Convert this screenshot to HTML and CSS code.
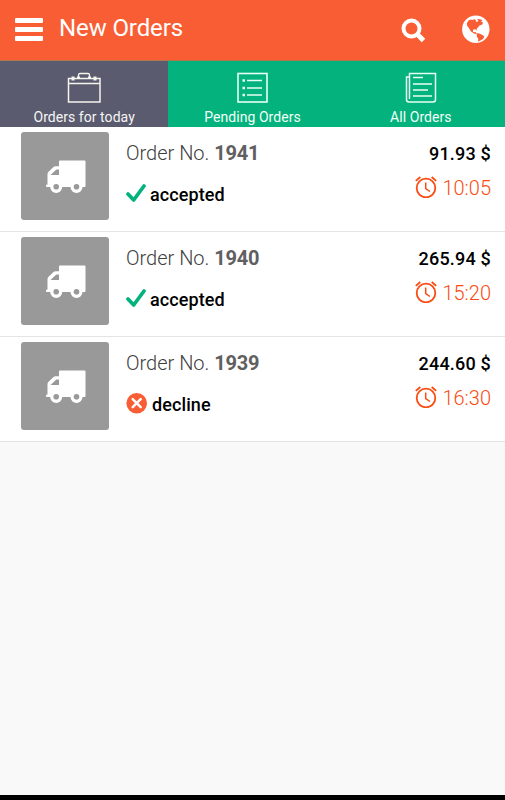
FILE: index.html
```
<!DOCTYPE html>
<html lang="en">
<head>
    <meta charset="UTF-8">
    <meta name="viewport" content="width=device-width, initial-scale=1.0">
    <title>New Orders</title>
    <link rel="stylesheet" href="styles.css">
</head>
<body>
    <!-- Shared icons -->
    <svg class="icon-defs" width="0" height="0">
        <symbol id="truck" viewBox="0 0 40 34">
            <path fill="#fff" d="M14 .5H38.500Q39.500 .5 39.500 1.500V26Q39.500 27 38.500 27H36.500A6 6 0 0 1 24.500 27H16.200A6 6 0 0 1 4.200 27H.8Q0 27 0 26.200V25Q0 24.500 1.500 24.500V14Q1.500 12.800 2.300 12L7.500 7Q8.300 6.300 9.500 6.300H13V1.500Q13 .5 14 .5Z"/>
            <path fill="#999" d="M4.500 15L9.600 10.200Q10 9.500 10.800 9.500H13V15Z"/>
            <circle cx="10.200" cy="26.800" r="2.800" fill="#999"/>
            <circle cx="30.500" cy="26.800" r="2.800" fill="#999"/>
        </symbol>
        <symbol id="clock" viewBox="0 0 22 22">
            <g fill="none" stroke="#fa4b12">
                <circle cx="11" cy="12" r="9.300" stroke-width="1.800"/>
                <path stroke-width="1.500" d="M10.700 6.500V12.500L15 15.500"/>
                <path stroke-width="1.800" d="M.8 4.900L5.300 1M16.700 1L21.200 4.900"/>
            </g>
        </symbol>
        <symbol id="check" viewBox="0 0 20 20">
            <path fill="none" stroke="#03b27d" stroke-width="3.700" stroke-linejoin="round" stroke-linecap="round" d="M2 10L7.700 16L18 2"/>
        </symbol>
        <symbol id="cross" viewBox="0 0 22 22">
            <circle cx="10.700" cy="10.300" r="10.300" fill="#f95d34"/>
            <path stroke="#fff" stroke-width="2.500" stroke-linecap="round" d="M6.700 6.200L14.700 14.200M14.700 6.200L6.700 14.200"/>
        </symbol>
    </svg>

    <header class="topbar">
        <div class="menu">
            <span></span>
            <span></span>
            <span></span>
        </div>
        <h1>New Orders</h1>
        <svg class="search" width="26" height="26" viewBox="0 0 26 26">
            <circle cx="10.500" cy="10.500" r="8" fill="none" stroke="#fff" stroke-width="4"/>
            <path stroke="#fff" stroke-width="5" d="M16 16L22.500 22.500"/>
        </svg>
        <svg class="globe" width="28" height="28" viewBox="0 0 28 28">
            <circle cx="13.800" cy="14.200" r="13.700" fill="#fff"/>
            <path fill="#f95d34" d="M5 8L6.500 5.500L9 4.500L10.500 5L12.500 4.200L14 5L13.500 6L15 7L16.500 6L15 4.500L17 4L20.500 5L19 6.500L21 7.500L20.300 9.500L17.500 10.500L16 12.500L14.800 13.500L14.500 15.500L13.300 14.200L11.300 14.500L10.800 16.500L12 17.200L13.800 17L14 18.500L16.500 18.200L20 19.800L22.500 21.500L21 24L18 25.800L16 26.800L16.400 24L14.800 21.500L15 19.500L12 18.600L9 16.500L6.500 12.500L5 10.500Z"/>
        </svg>
    </header>

    <nav class="tabs">
        <a class="tab active">
            <svg width="34" height="32" viewBox="0 0 34 32" fill="none" stroke="#f5f5ef">
                <rect x="1.500" y="6.500" width="31.500" height="23.500" stroke-width="1.500"/>
                <path stroke-width="1.300" d="M1.500 11.500H33M11.500 6V3Q11.500 1.500 13 1.500H21Q22.500 1.500 22.500 3V6"/>
                <path stroke-width="3" d="M6 4.500V8.500M28 4.500V8.500M11.500 4.500V7M22.500 4.500V7"/>
            </svg>
            Orders for today
        </a>
        <a class="tab">
            <svg width="34" height="32" viewBox="0 0 34 32" fill="none" stroke="#e8fff4">
                <rect x="3" y="1.500" width="29" height="28.500" stroke-width="1.600"/>
                <path stroke-width="1.500" d="M12 8.500H27M12 16H27M12 23H27"/>
                <path stroke-width="2.500" d="M7.500 8.500H10M7.500 16H10M7.500 23H10"/>
            </svg>
            Pending Orders
        </a>
        <a class="tab">
            <svg width="34" height="32" viewBox="0 0 34 32" fill="none" stroke="#e8fff4" stroke-width="1.500">
                <path d="M5.500 27V1.500H31.500V27.500Q31.500 30 29 30H5Q2.500 30 2.500 27.500V5H5.500"/>
                <path d="M9 5.500H19M9 12H28M9 18H24M9 24H28"/>
            </svg>
            All Orders
        </a>
    </nav>

    <main class="orders">
        <div class="order">
            <div class="thumb"><svg width="40" height="34"><use href="#truck"/></svg></div>
            <div class="info">
                <p class="number">Order No. <b>1941</b></p>
                <p class="status"><svg width="20" height="20"><use href="#check"/></svg>accepted</p>
            </div>
            <div class="summary">
                <p class="price">91.93 $</p>
                <p class="time"><svg width="22" height="22"><use href="#clock"/></svg>10:05</p>
            </div>
        </div>
        <div class="order">
            <div class="thumb"><svg width="40" height="34"><use href="#truck"/></svg></div>
            <div class="info">
                <p class="number">Order No. <b>1940</b></p>
                <p class="status"><svg width="20" height="20"><use href="#check"/></svg>accepted</p>
            </div>
            <div class="summary">
                <p class="price">265.94 $</p>
                <p class="time"><svg width="22" height="22"><use href="#clock"/></svg>15:20</p>
            </div>
        </div>
        <div class="order">
            <div class="thumb"><svg width="40" height="34"><use href="#truck"/></svg></div>
            <div class="info">
                <p class="number">Order No. <b>1939</b></p>
                <p class="status"><svg width="22" height="22"><use href="#cross"/></svg>decline</p>
            </div>
            <div class="summary">
                <p class="price">244.60 $</p>
                <p class="time"><svg width="22" height="22"><use href="#clock"/></svg>16:30</p>
            </div>
        </div>
    </main>
    <footer class="bottom"></footer>
</body>
</html>
```
FILE: styles.css
```
* {
    box-sizing: border-box;
}

body {
    margin: 0;
    height: 100vh;
    display: flex;
    flex-direction: column;
    font-family: Roboto, sans-serif;
    background-color: #f9f9f9;
    overflow: hidden;
}

h1, p {
    margin: 0;
}

svg {
    flex: none;
}

.icon-defs {
    display: block;
    height: 0;
}

/* Header */
.topbar {
    display: flex;
    align-items: flex-start;
    height: 61px;
    flex: none;
    padding: 0 15px;
    background-color: #f95d34;
    border-bottom: 1px solid #b07850;
}

.menu {
    display: flex;
    flex-direction: column;
    gap: 4px;
    width: 28px;
    margin-top: 18px;
}

.menu span {
    height: 5px;
    border-radius: 1px;
    background-color: #fff;
}

.topbar h1 {
    flex: 1;
    margin: 14px 0 0 16px;
    font-size: 24px;
    line-height: 28px;
    font-weight: 400;
    letter-spacing: -0.1px;
    color: #fff;
}

.search {
    margin-top: 18px;
}

.globe {
    margin: 15px 0 0 35px;
}

/* Tabs */
.tabs {
    display: grid;
    grid-template-columns: repeat(3, 1fr);
    flex: none;
    height: 66px;
    background-color: #03b27d;
}

.tab {
    display: flex;
    flex-direction: column;
    align-items: center;
    padding-top: 11px;
    font-size: 14px;
    line-height: 16px;
    letter-spacing: 0.05px;
    color: #f3fff9;
}

.tab svg {
    margin-bottom: 5px;
}

.tab.active {
    background-color: #5a5b6e;
    color: #f5f5f5;
}

/* Orders */
.order {
    display: flex;
    height: 105px;
    padding: 5px 14px 0 21px;
    background-color: #fff;
    border-bottom: 1px solid #e4e4e4;
}

.thumb {
    display: flex;
    align-items: center;
    justify-content: center;
    width: 88px;
    height: 88px;
    padding: 1px 0 0 2px;
    border-radius: 3px;
    background-color: #999;
}

.info {
    flex: 1;
    margin-left: 17px;
}

.number {
    padding-top: 9px;
    font-size: 20px;
    line-height: 24px;
    font-weight: 300;
    color: #404040;
}

.number b {
    font-weight: 700;
    letter-spacing: -0.2px;
    color: #606060;
}

.status {
    display: flex;
    align-items: center;
    gap: 4px;
    height: 24px;
    margin-top: 17px;
    font-size: 18px;
    font-weight: 500;
    letter-spacing: 0.1px;
    color: #000;
}

.summary {
    text-align: right;
}

.price {
    padding-top: 10px;
    font-size: 18px;
    line-height: 24px;
    font-weight: 500;
    letter-spacing: 0.2px;
    color: #000;
}

.time {
    display: flex;
    align-items: center;
    justify-content: flex-end;
    gap: 5px;
    height: 24px;
    margin-top: 10px;
    font-size: 20px;
    font-weight: 300;
    color: #fa4b12;
}

.time svg {
    margin-bottom: 2px;
}

.bottom {
    flex: none;
    height: 5px;
    margin-top: auto;
    background-color: #000;
}
```
